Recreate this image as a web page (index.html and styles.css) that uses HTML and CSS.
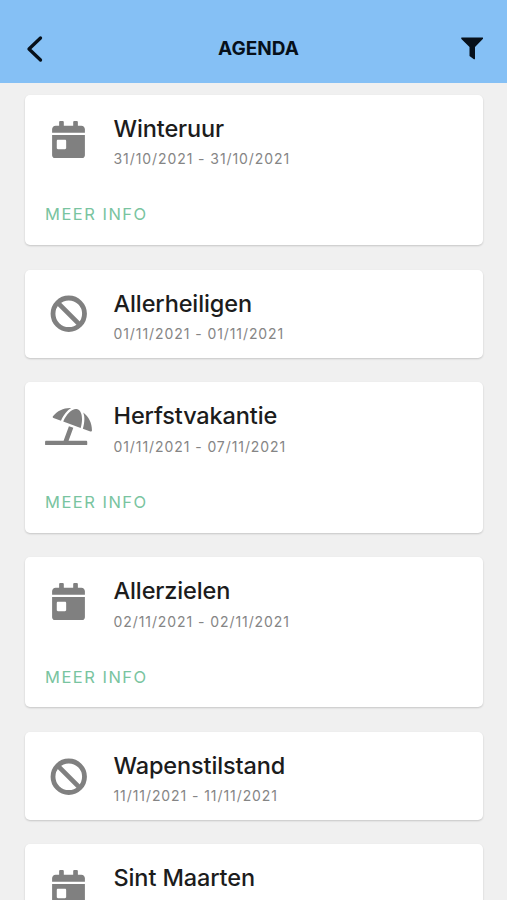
FILE: index.html
```html
<!DOCTYPE html>
<html lang="nl">
<head>
<meta charset="utf-8">
<title>Agenda</title>
<link rel="stylesheet" href="styles.css">
</head>
<body>
<svg class="sprite" aria-hidden="true">
  <symbol id="calendar" viewBox="0 0 448 512"><path d="M0 464c0 26.500 21.500 48 48 48h352c26.500 0 48-21.500 48-48V192H0v272zm64-192c0-8.800 7.200-16 16-16h96c8.800 0 16 7.200 16 16v96c0 8.800-7.200 16-16 16H80c-8.800 0-16-7.200-16-16v-96zM400 64h-48V16c0-8.800-7.200-16-16-16h-32c-8.800 0-16 7.200-16 16v48H160V16c0-8.800-7.200-16-16-16h-32c-8.800 0-16 7.200-16 16v48H48C21.500 64 0 85.500 0 112v48h448v-48c0-26.500-21.500-48-48-48z"/></symbol>
  <symbol id="ban" viewBox="0 0 512 512"><g fill="none" stroke="currentColor" stroke-width="66"><circle cx="256" cy="256" r="215"/><path d="M104 104l304 304"/></g></symbol>
  <symbol id="beach" viewBox="0 0 640 512"><path d="M115.380 136.900l102.110 37.180c35.190-81.540 86.210-144.290 139-173.700-95.880-4.890-188.780 36.960-248.530 111.800-6.690 8.400-2.660 21.050 7.420 24.720zm132.250 48.160l238.480 86.830c35.760-121.380 18.700-231.660-42.630-253.980-7.400-2.700-15.130-4-23.090-4-58.020.01-128.270 69.170-172.760 171.150zM521.480 60.500c6.220 16.300 10.830 34.600 13.200 55.190 5.740 49.890-1.420 108.230-18.950 166.980l102.620 37.360c10.090 3.670 21.310-3.430 21.570-14.170 2.320-95.690-41.910-187.440-118.440-245.360zM560 447.980H321.060L386 269.500l-60.140-21.900-72.900 200.370H16c-8.840 0-16 7.160-16 16.010v32.010C0 504.830 7.160 512 16 512h544c8.840 0 16-7.170 16-16.010v-32.010c0-8.840-7.160-16-16-16z"/></symbol>
</svg>
<div class="screen">
  <header class="bar">
    <svg class="back" viewBox="0 0 18 28"><path d="M14.500 3L3 14l11.500 11"/></svg>
    <h1 class="heading">AGENDA</h1>
    <svg class="filter" viewBox="0 0 22 23"><path d="M.6.500h21.200q.6.800 0 1.500L14 10v11.500q0 1.200-1.100.7L8.500 19V10L.400 2Q-.1 1.100.6.500z"/></svg>
  </header>
  <main class="list">
    <article class="card tall">
      <div class="row"><svg class="icon cal"><use href="#calendar"/></svg><div><h2 class="title">Winteruur</h2><p class="date">31/10/2021 - 31/10/2021</p></div></div>
      <a class="more">MEER INFO</a>
    </article>
    <article class="card">
      <div class="row"><svg class="icon ban"><use href="#ban"/></svg><div><h2 class="title">Allerheiligen</h2><p class="date">01/11/2021 - 01/11/2021</p></div></div>
    </article>
    <article class="card tall">
      <div class="row"><svg class="icon beach"><use href="#beach"/></svg><div><h2 class="title">Herfstvakantie</h2><p class="date">01/11/2021 - 07/11/2021</p></div></div>
      <a class="more">MEER INFO</a>
    </article>
    <article class="card tall">
      <div class="row"><svg class="icon cal"><use href="#calendar"/></svg><div><h2 class="title">Allerzielen</h2><p class="date">02/11/2021 - 02/11/2021</p></div></div>
      <a class="more">MEER INFO</a>
    </article>
    <article class="card">
      <div class="row"><svg class="icon ban"><use href="#ban"/></svg><div><h2 class="title">Wapenstilstand</h2><p class="date">11/11/2021 - 11/11/2021</p></div></div>
    </article>
    <article class="card">
      <div class="row"><svg class="icon cal"><use href="#calendar"/></svg><div><h2 class="title">Sint Maarten</h2></div></div>
    </article>
  </main>
</div>
</body>
</html>
```
FILE: styles.css
```css
* { box-sizing: border-box; }
body { margin: 0; background: #f0f0f0; font-family: Inter, "Liberation Sans", sans-serif; }
h1, h2, p { margin: 0; }
.sprite { display: none; }
.screen { height: 900px; overflow: hidden; }
.bar {
  height: 83px;
  padding: 14px 24px 0 26px;
  display: grid;
  grid-template-columns: 64px 1fr 56px;
  align-items: center;
  background: #85c0f5;
  color: #07101a;
}
.back { width: 18px; height: 28px; fill: none; stroke: #07101a; stroke-width: 3.3; stroke-linecap: round; stroke-linejoin: round; }
.heading { text-align: center; font-size: 19px; font-weight: 700; line-height: 24px; }
.filter { width: 22px; height: 23px; justify-self: end; fill: #07101a; }
.list { padding: 12px 24.400px 0 25px; display: flex; flex-direction: column; gap: 24.600px; }
.card {
  height: 87.800px;
  flex: none;
  padding: 18px 20px 0;
  background: #fff;
  border-radius: 5px;
  box-shadow: 0 1px 2px rgba(0, 0, 0, .18);
}
.tall { height: 150.300px; }
.row { display: grid; grid-template-columns: 47px 1fr; column-gap: 21.500px; }
.icon { height: 37.500px; margin-top: 7.500px; justify-self: center; fill: #808080; color: #808080; }
.cal { width: 33px; }
.ban { width: 37.500px; }
.beach { width: 47px; }
.title { font-size: 23.500px; font-weight: 500; line-height: 32px; letter-spacing: -.12px; color: #1c1c1c; white-space: nowrap; }
.date { margin-top: 4.400px; font-size: 14px; line-height: 20px; letter-spacing: .92px; color: #858585; white-space: nowrap; }
.more { display: block; width: max-content; margin-top: 34px; font-size: 16.500px; line-height: 22px; letter-spacing: 1.500px; color: #79c4a0; }
```
